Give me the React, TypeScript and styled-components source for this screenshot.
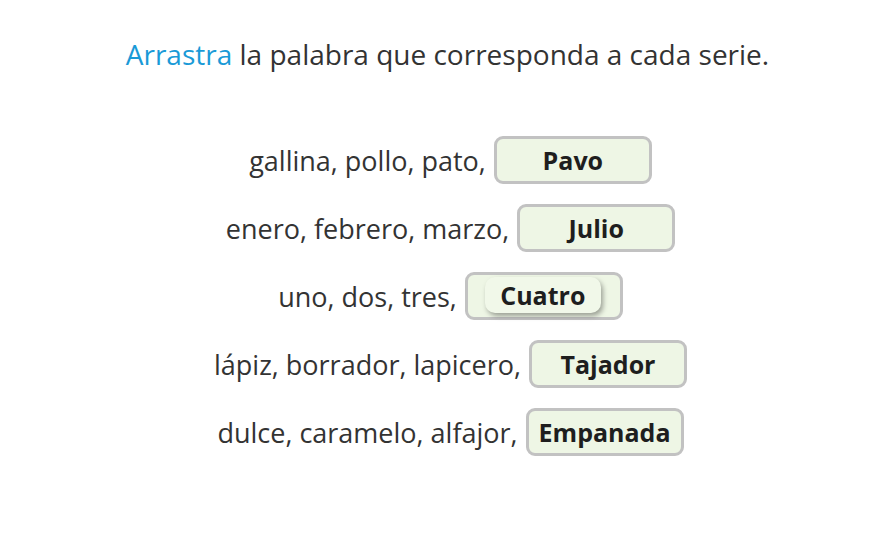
import React from "react";
import styled, { createGlobalStyle } from "styled-components";

const Global = createGlobalStyle`
  html, body { margin: 0; padding: 0; background: #ffffff; }
  body { font-family: "Open Sans", "Noto Sans", sans-serif; color: #333333; }
`;

const Page = styled.div`
  width: 877px;
  height: 550px;
  box-sizing: border-box;
  padding: 35px 0 0 18px;
  display: flex;
  flex-direction: column;
  align-items: center;
`;

const Title = styled.h1`
  margin: 0;
  font-size: 28px;
  font-weight: 400;
  line-height: 38px;
  color: #333333;
`;

const Accent = styled.span`
  color: #1a9ad7;
`;

const List = styled.div`
  margin-top: 63px;
  display: flex;
  flex-direction: column;
  gap: 20px;
  align-items: center;
  padding-left: 6px;
`;

const Row = styled.div`
  display: flex;
  align-items: center;
  gap: 8px;
  height: 48px;
`;

const Series = styled.span`
  font-size: 27px;
  color: #333333;
`;

const Slot = styled.div`
  width: 158px;
  height: 48px;
  box-sizing: border-box;
  border: 3px solid #c2c2c2;
  border-radius: 9px;
  background: #eef6e5;
  display: flex;
  align-items: center;
  justify-content: center;
  font-size: 25px;
  font-weight: 700;
  color: #1e1e1e;
`;

const Chip = styled.div`
  width: 116px;
  height: 36px;
  box-sizing: border-box;
  border-radius: 10px;
  background: #f1f8e9;
  box-shadow: 2px 3px 5px rgba(0, 0, 0, 0.35);
  display: flex;
  align-items: center;
  justify-content: center;
  font-size: 25px;
  font-weight: 700;
  color: #1e1e1e;
  margin-top: -2px;
  margin-right: 2px;
`;

const rows: { text: string; word: string; chip?: boolean }[] = [
  { text: "gallina, pollo, pato,", word: "Pavo" },
  { text: "enero, febrero, marzo,", word: "Julio" },
  { text: "uno, dos, tres,", word: "Cuatro", chip: true },
  { text: "lápiz, borrador, lapicero,", word: "Tajador" },
  { text: "dulce, caramelo, alfajor,", word: "Empanada" },
];

export default function App() {
  return (
    <>
      <Global />
      <Page>
        <Title>
          <Accent>Arrastra</Accent> la palabra que corresponda a cada serie.
        </Title>
        <List>
          {rows.map((r) => (
            <Row key={r.word}>
              <Series>{r.text}</Series>
              <Slot>{r.chip ? <Chip>{r.word}</Chip> : r.word}</Slot>
            </Row>
          ))}
        </List>
      </Page>
    </>
  );
}
